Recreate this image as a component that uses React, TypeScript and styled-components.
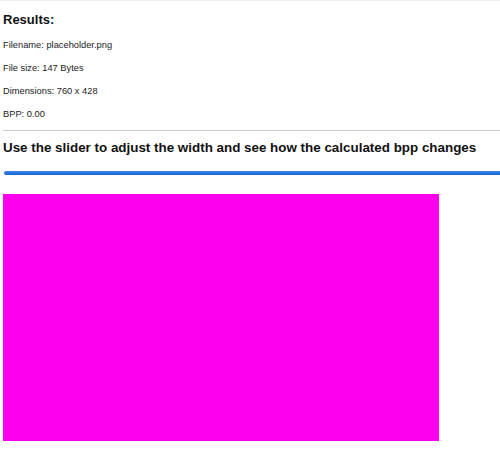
import React, { useState } from "react";
import styled, { createGlobalStyle } from "styled-components";

const GlobalStyle = createGlobalStyle`
  html, body {
    margin: 0;
    padding: 0;
    background: #ffffff;
    overflow: hidden;
  }
  body {
    font-family: "Liberation Sans", Arial, sans-serif;
    color: #1b1b1b;
  }
`;

const Page = styled.div`
  padding: 0 0 0 3px;
  border-top: 1px solid #f0f0f0;
`;

const Title = styled.h2`
  margin: 0;
  padding-top: 11px;
  font-size: 13px;
  font-weight: 700;
  line-height: 16px;
  color: #111;
`;

const InfoLine = styled.p`
  margin: 0;
  margin-top: 12px;
  font-size: 9.3px;
  line-height: 11px;
  color: #222;
`;

const Divider = styled.hr`
  margin: 10px 0 0 0;
  border: none;
  border-top: 1px solid #c8c8c8;
`;

const SubTitle = styled.h3`
  margin: 9px 0 0 0;
  font-size: 13.4px;
  font-weight: 700;
  line-height: 16px;
  color: #111;
  white-space: nowrap;
`;

const Slider = styled.input`
  -webkit-appearance: none;
  appearance: none;
  display: block;
  margin: 15px 0 0 1px;
  width: calc(100% - 1px);
  height: 4px;
  background: transparent;

  &::-webkit-slider-runnable-track {
    height: 4px;
    border-radius: 2px 0 0 2px;
    background: linear-gradient(#3d86e6, #1a66cf);
  }
  &::-webkit-slider-thumb {
    -webkit-appearance: none;
    width: 0;
    height: 0;
  }
`;

const Preview = styled.div<{ $w: number; $h: number }>`
  margin-top: 19px;
  width: ${(p) => p.$w}px;
  height: ${(p) => p.$h}px;
  background: #ff00ef;
`;

export default function App() {
  const [width, setWidth] = useState(436);

  return (
    <>
      <GlobalStyle />
      <Page>
        <Title>Results:</Title>
        <InfoLine>Filename: placeholder.png</InfoLine>
        <InfoLine>File size: 147 Bytes</InfoLine>
        <InfoLine>Dimensions: 760 x 428</InfoLine>
        <InfoLine>BPP: 0.00</InfoLine>
        <Divider />
        <SubTitle>
          Use the slider to adjust the width and see how the calculated bpp
          changes
        </SubTitle>
        <Slider
          type="range"
          min={0}
          max={436}
          value={width}
          onChange={(e) => setWidth(Number(e.target.value))}
        />
        <Preview $w={width} $h={Math.round((width * 428) / 760) + 1} />
      </Page>
    </>
  );
}
